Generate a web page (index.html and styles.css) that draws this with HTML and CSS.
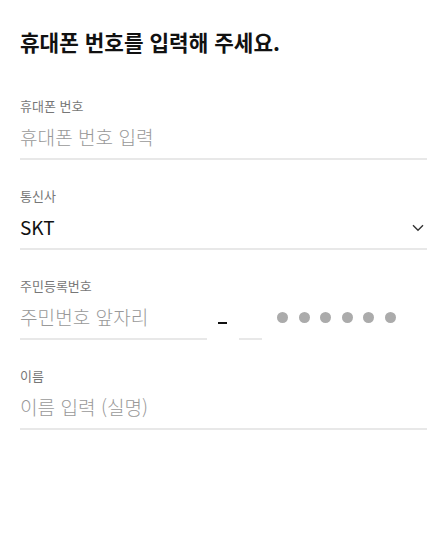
FILE: index.html
```html
<!DOCTYPE html>
<html lang="ko">
<head>
<meta charset="utf-8">
<link rel="stylesheet" href="styles.css">
</head>
<body>
<main class="page">
  <h1 class="title">휴대폰 번호를 입력해 주세요.</h1>

  <section class="field">
    <div class="label">휴대폰 번호</div>
    <div class="input-row underline"><span class="placeholder">휴대폰 번호 입력</span></div>
  </section>

  <section class="field">
    <div class="label">통신사</div>
    <div class="input-row underline select">
      <span class="value">SKT</span>
      <svg class="chevron" width="12" height="8" viewBox="0 0 12 8"><path d="M1 1.2 L6 6.2 L11 1.2" fill="none" stroke="#333" stroke-width="1.4"/></svg>
    </div>
  </section>

  <section class="field">
    <div class="label">주민등록번호</div>
    <div class="rrn">
      <div class="input-row underline front"><span class="placeholder">주민번호 앞자리</span></div>
      <span class="dash"></span>
      <div class="input-row underline digit"></div>
      <div class="dots">
        <span class="dot"></span><span class="dot"></span><span class="dot"></span><span class="dot"></span><span class="dot"></span><span class="dot"></span>
      </div>
    </div>
  </section>

  <section class="field">
    <div class="label">이름</div>
    <div class="input-row underline"><span class="placeholder">이름 입력 (실명)</span></div>
  </section>
</main>
</body>
</html>
```

FILE: styles.css
```css
html, body {
  margin: 0;
  padding: 0;
  background: #fff;
}
body {
  font-family: "Noto Sans CJK KR", "Noto Sans", sans-serif;
  color: #111;
}
.page {
  padding: 27px 13px 0 20px;
  display: flex;
  flex-direction: column;
}
.title {
  margin: 0;
  font-size: 21.3px;
  line-height: 30px;
  font-weight: 700;
  color: #111;
}
.field {
  display: flex;
  flex-direction: column;
  margin-top: 27px;
}
.field:first-of-type {
  margin-top: 40px;
}
.label {
  font-size: 13px;
  line-height: 18px;
  font-weight: 400;
  color: #777;
}
.input-row {
  height: 43px;
  display: flex;
  align-items: center;
}
.underline {
  border-bottom: 2px solid #e8e8e8;
}
.placeholder {
  font-size: 19.1px;
  font-weight: 300;
  color: #999;
}
.value {
  font-size: 19px;
  color: #111;
}
.select {
  justify-content: space-between;
}
.chevron {
  margin-right: 3px;
  margin-top: 2px;
}
.rrn {
  display: flex;
  align-items: flex-end;
}
.front {
  width: 187px;
}
.dash {
  width: 9px;
  height: 2px;
  background: #111;
  margin: 0 12px 16px 11px;
  align-self: flex-end;
}
.digit {
  width: 23px;
}
.dots {
  display: flex;
  gap: 10.6px;
  margin-left: 15px;
  height: 45px;
  align-items: center;
}
.dot {
  width: 11px;
  height: 11px;
  border-radius: 50%;
  background: #ababab;
}
```
